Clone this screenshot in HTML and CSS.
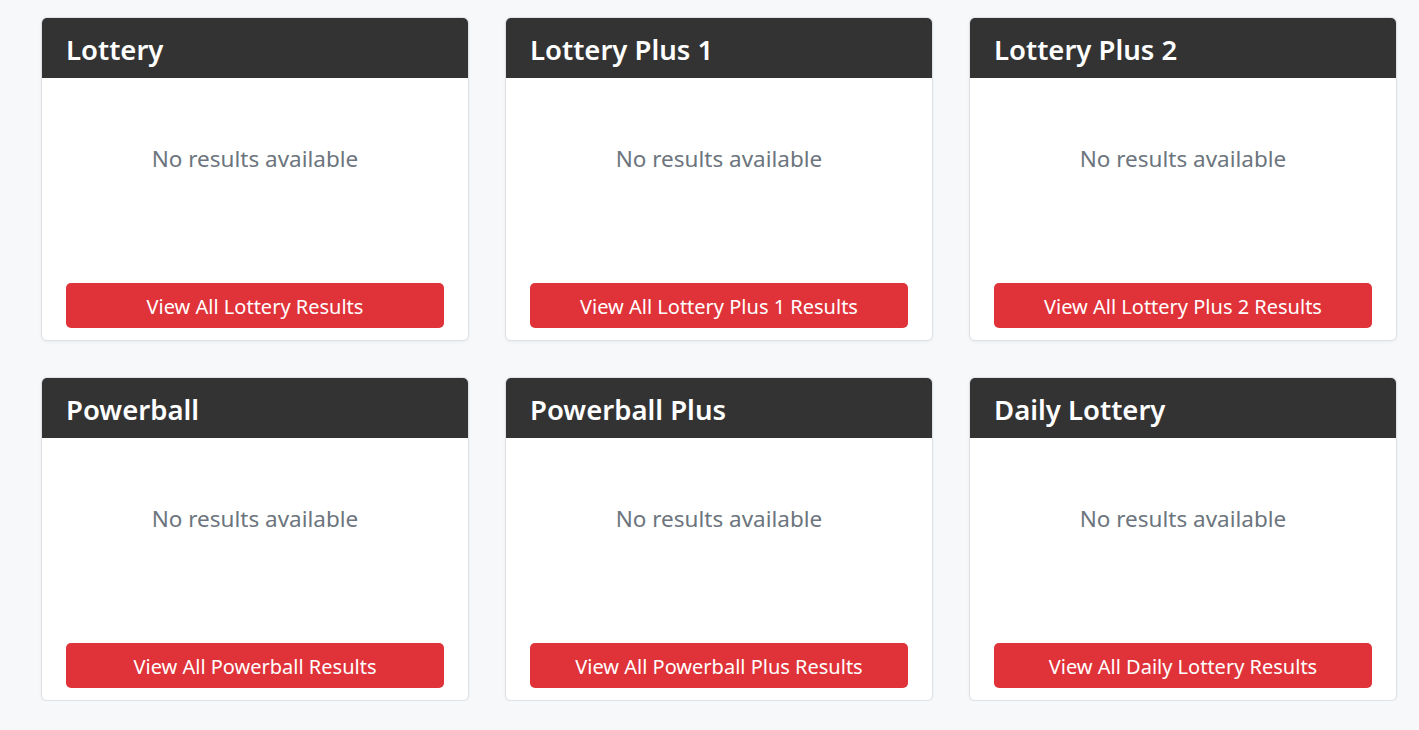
FILE: index.html
```html
<!DOCTYPE html>
<html lang="en">
<head>
<meta charset="utf-8">
<title>Lottery Results</title>
<link rel="stylesheet" href="styles.css">
</head>
<body>
<main class="grid">
  <section class="card">
    <header class="card-header"><h3>Lottery</h3></header>
    <div class="card-body"><p class="empty">No results available</p></div>
    <div class="card-footer"><a class="btn" href="#">View All Lottery Results</a></div>
  </section>
  <section class="card">
    <header class="card-header"><h3>Lottery Plus 1</h3></header>
    <div class="card-body"><p class="empty">No results available</p></div>
    <div class="card-footer"><a class="btn" href="#">View All Lottery Plus 1 Results</a></div>
  </section>
  <section class="card">
    <header class="card-header"><h3>Lottery Plus 2</h3></header>
    <div class="card-body"><p class="empty">No results available</p></div>
    <div class="card-footer"><a class="btn" href="#">View All Lottery Plus 2 Results</a></div>
  </section>
  <section class="card">
    <header class="card-header"><h3>Powerball</h3></header>
    <div class="card-body"><p class="empty">No results available</p></div>
    <div class="card-footer"><a class="btn" href="#">View All Powerball Results</a></div>
  </section>
  <section class="card">
    <header class="card-header"><h3>Powerball Plus</h3></header>
    <div class="card-body"><p class="empty">No results available</p></div>
    <div class="card-footer"><a class="btn" href="#">View All Powerball Plus Results</a></div>
  </section>
  <section class="card">
    <header class="card-header"><h3>Daily Lottery</h3></header>
    <div class="card-body"><p class="empty">No results available</p></div>
    <div class="card-footer"><a class="btn" href="#">View All Daily Lottery Results</a></div>
  </section>
</main>
</body>
</html>
```

FILE: styles.css
```css
* { box-sizing: border-box; }
html, body {
  margin: 0;
  padding: 0;
  background: #f7f8fa;
  font-family: "Noto Sans", "Open Sans", sans-serif;
}
.grid {
  display: grid;
  grid-template-columns: repeat(3, 428px);
  column-gap: 36px;
  row-gap: 36px;
  padding: 17px 0 0 41px;
}
.card {
  height: 324px;
  background: #fff;
  border: 1px solid #dfe1e4;
  border-radius: 6px;
  box-shadow: 0 1px 3px rgba(0,0,0,0.06);
  display: flex;
  flex-direction: column;
  overflow: hidden;
}
.card-header {
  background: #333333;
  color: #fff;
  height: 60px;
  padding: 3px 24px 0;
  display: flex;
  align-items: center;
}
.card-header h3 {
  margin: 0;
  font-size: 27.5px;
  font-weight: 600;
  line-height: 1.2;
}
.card-body {
  flex: 1;
  display: flex;
  justify-content: center;
  padding-top: 67px;
}
.empty {
  margin: 0;
  color: #6c757d;
  font-size: 22.5px;
  line-height: 1.2;
}
.card-footer {
  padding: 0 24px 12px;
}
.btn {
  display: flex;
  align-items: center;
  justify-content: center;
  height: 45px;
  padding-top: 2px;
  background: #e03239;
  color: #fff;
  text-decoration: none;
  border-radius: 5px;
  font-size: 20px;
}
```
